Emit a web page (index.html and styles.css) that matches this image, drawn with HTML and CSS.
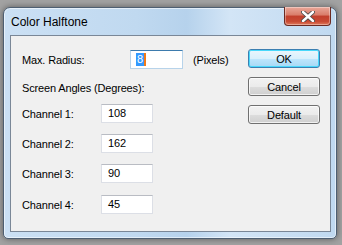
FILE: index.html
```html
<!DOCTYPE html>
<html lang="en">
<head>
  <meta charset="UTF-8">
  <title>Color Halftone</title>
  <link rel="stylesheet" href="styles.css">
</head>
<body>
  <div class="window">
    <div class="titlebar">
      <span class="title">Color Halftone</span>
      <button class="close" type="button" aria-label="Close">
        <svg width="14" height="11" viewBox="0 0 14 11">
          <path d="M2 1 L12 10 M12 1 L2 10" stroke="#4a4a4a" stroke-width="4.2" stroke-linecap="round"/>
          <path d="M2 1 L12 10 M12 1 L2 10" stroke="#ffffff" stroke-width="2.4" stroke-linecap="round"/>
        </svg>
      </button>
    </div>
    <div class="client">
      <div class="form">
        <div class="row">
          <label class="label wide">Max. Radius:</label>
          <div class="field focused"><span class="sel">8</span></div>
          <span class="unit">(Pixels)</span>
        </div>
        <div class="row heading">Screen Angles (Degrees):</div>
        <div class="row channel">
          <label class="label">Channel 1:</label>
          <div class="field">108</div>
        </div>
        <div class="row channel">
          <label class="label">Channel 2:</label>
          <div class="field">162</div>
        </div>
        <div class="row channel">
          <label class="label">Channel 3:</label>
          <div class="field">90</div>
        </div>
        <div class="row channel last">
          <label class="label">Channel 4:</label>
          <div class="field">45</div>
        </div>
      </div>
      <div class="buttons">
        <button class="btn default" type="button">OK</button>
        <button class="btn" type="button">Cancel</button>
        <button class="btn" type="button">Default</button>
      </div>
    </div>
  </div>
</body>
</html>
```

FILE: styles.css
```css
* {
  box-sizing: border-box;
}
body {
  margin: 0;
  width: 342px;
  height: 245px;
  background: #a2a2a2;
  font-family: "Liberation Sans", Arial, sans-serif;
  font-size: 11px;
  letter-spacing: -0.15px;
  color: #000;
  overflow: hidden;
}
.window {
  margin: 7px 0 0 3px;
  width: 334px;
  height: 232px;
  padding: 0 5px 6px 6px;
  border: 1px solid #4e5f72;
  border-radius: 7px 7px 5px 5px;
  background: linear-gradient(to right, #cbe0f4 0%, #c0d9f0 40%, #b6d2ec 55%, #d3e5f6 68%, #c0d9f0 100%);
  box-shadow: 0 0 6px rgba(0,0,0,0.45), inset 0 0 0 1px rgba(255,255,255,0.55);
}
.titlebar {
  height: 27px;
  display: flex;
  align-items: flex-start;
  justify-content: space-between;
}
.title {
  font-size: 12px;
  letter-spacing: 0;
  line-height: 16px;
  padding: 6px 0 0 1px;
  color: #000;
}
.close {
  margin: -1px 0 0 0;
  width: 47px;
  height: 19px;
  padding: 0;
  border: 1px solid #6b2a22;
  border-top: none;
  border-radius: 0 0 4px 4px;
  background: linear-gradient(#e9a89a 0%, #d97c69 45%, #c23f2c 50%, #c84a33 80%, #e07a5c 100%);
  box-shadow: inset 0 0 0 1px rgba(255,255,255,0.35);
  display: flex;
  align-items: center;
  justify-content: center;
}
.client {
  height: 197px;
  border: 1px solid #7a8797;
  background: #f0f0f0;
  display: flex;
  justify-content: space-between;
}
.form {
  padding: 14px 0 0 11px;
}
.row {
  display: flex;
  align-items: center;
  height: 19px;
}
.heading {
  margin-top: 9px;
}
.channel {
  margin-top: 11px;
}
.heading + .channel {
  margin-top: 7px;
}
.last {
  margin-top: 12px;
}
.label {
  width: 79px;
}
.label.wide {
  width: 108px;
}
.field {
  width: 52px;
  height: 19px;
  padding: 0 0 0 6px;
  line-height: 17px;
  background: #fff;
  border: 1px solid #dcdfe6;
  border-top-color: #b9bcc3;
}
.field.focused {
  width: 53px;
  border-color: #b7d3ea;
  border-top-color: #3d7bad;
  padding-left: 5px;
}
.sel {
  display: inline-block;
  background: #3399ff;
  color: #fff;
  line-height: 13px;
  padding: 0 1px;
  border-right: 2px solid #f07a18;
}
.unit {
  margin-left: 10px;
}
.buttons {
  padding: 13px 10px 0 0;
  display: flex;
  flex-direction: column;
  gap: 9px;
}
.btn {
  width: 72px;
  height: 19px;
  padding: 0;
  font-family: inherit;
  font-size: 11px;
  letter-spacing: -0.15px;
  color: #000;
  border: 1px solid #707070;
  border-radius: 3px;
  background: linear-gradient(#f2f2f2 0%, #ebebeb 50%, #dddddd 51%, #cfcfcf 100%);
  box-shadow: inset 0 0 0 1px rgba(255,255,255,0.7);
}
.btn.default {
  border-color: #3c7fb1;
  background: linear-gradient(#eaf6fd 0%, #d9f0fc 50%, #bee6fd 51%, #a7d9f5 100%);
  box-shadow: inset 0 0 0 1px #48d8fb;
}
```
